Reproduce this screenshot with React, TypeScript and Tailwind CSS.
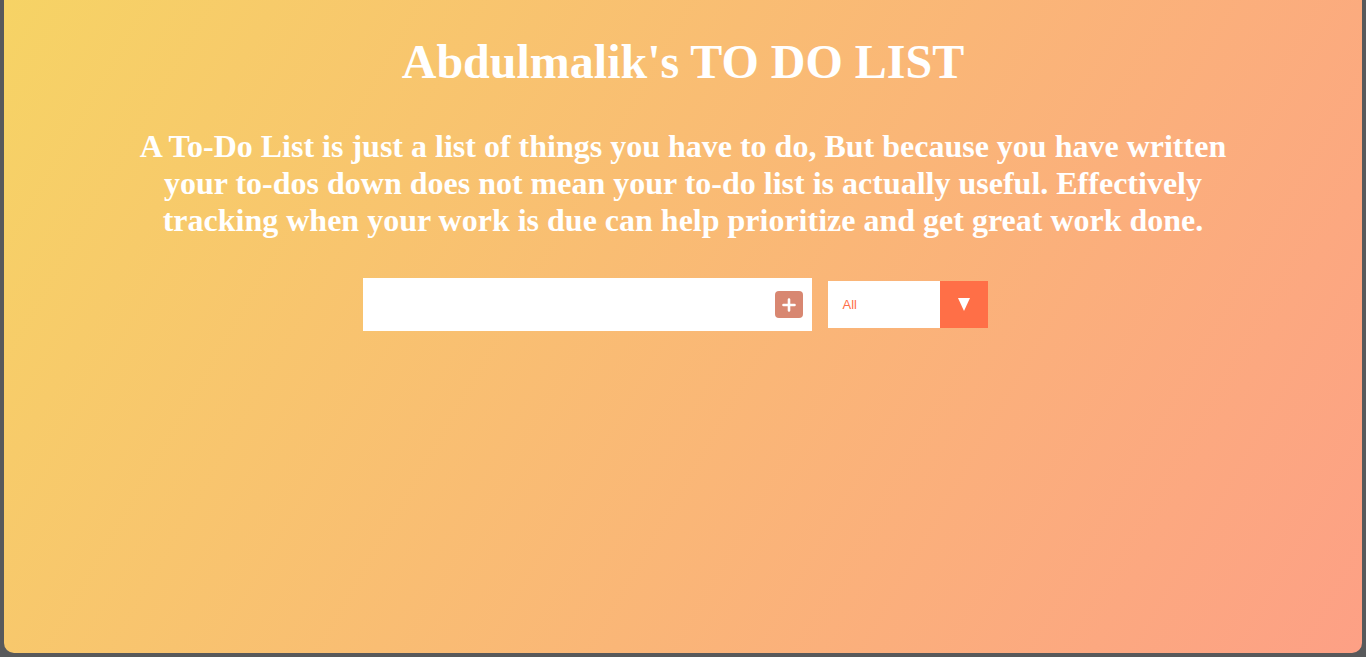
export default function App() {
  return (
    <div className="h-[657px] bg-[#58595b] px-1 pb-1">
      <div className="h-full rounded-b-[10px] bg-[linear-gradient(120deg,#f6d365,#fda085)] font-['Liberation_Serif',serif] text-white">
        <header className="pt-[34px] text-center">
          <h1 className="text-[48px] font-bold leading-[56px]">Abdulmalik's TO DO LIST</h1>
          <p className="mx-auto mt-[38px] max-w-[1110px] text-[32px] font-bold leading-[37px]">
            A To-Do List is just a list of things you have to do, But because you have written your to-dos down does not mean your to-do list is actually useful. Effectively tracking when your work is due can help prioritize and get great work done.
          </p>
        </header>
        <form className="mt-[39px] flex items-center justify-center gap-4 pr-4" onSubmit={(e) => e.preventDefault()}>
          <div className="flex h-[53px] w-[449px] items-center bg-white pr-[9px]">
            <input type="text" className="h-full w-0 min-w-0 flex-1 bg-transparent px-2 text-[32px] text-black outline-none" />
            <button type="submit" className="flex h-[27px] w-[28px] shrink-0 items-center justify-center rounded-[4px] bg-[#d88771]">
              <svg viewBox="0 0 16 16" className="h-[16px] w-[16px]">
                <path d="M8 2.5v11M2.5 8h11" stroke="white" strokeWidth="2.6" strokeLinecap="round" />
              </svg>
            </button>
          </div>
          <div className="flex h-[47px] w-[160px] bg-white font-['Liberation_Sans',sans-serif]">
            <div className="flex flex-1 items-center pl-[15px] text-[13px] text-[#ff6f47]">All</div>
            <div className="flex w-[48px] items-center justify-center bg-[#ff6f47]">
              <svg viewBox="0 0 12 13" className="h-[13px] w-[12px]">
                <polygon points="0,0 12,0 6,13" fill="white" />
              </svg>
            </div>
          </div>
        </form>
      </div>
    </div>
  );
}
